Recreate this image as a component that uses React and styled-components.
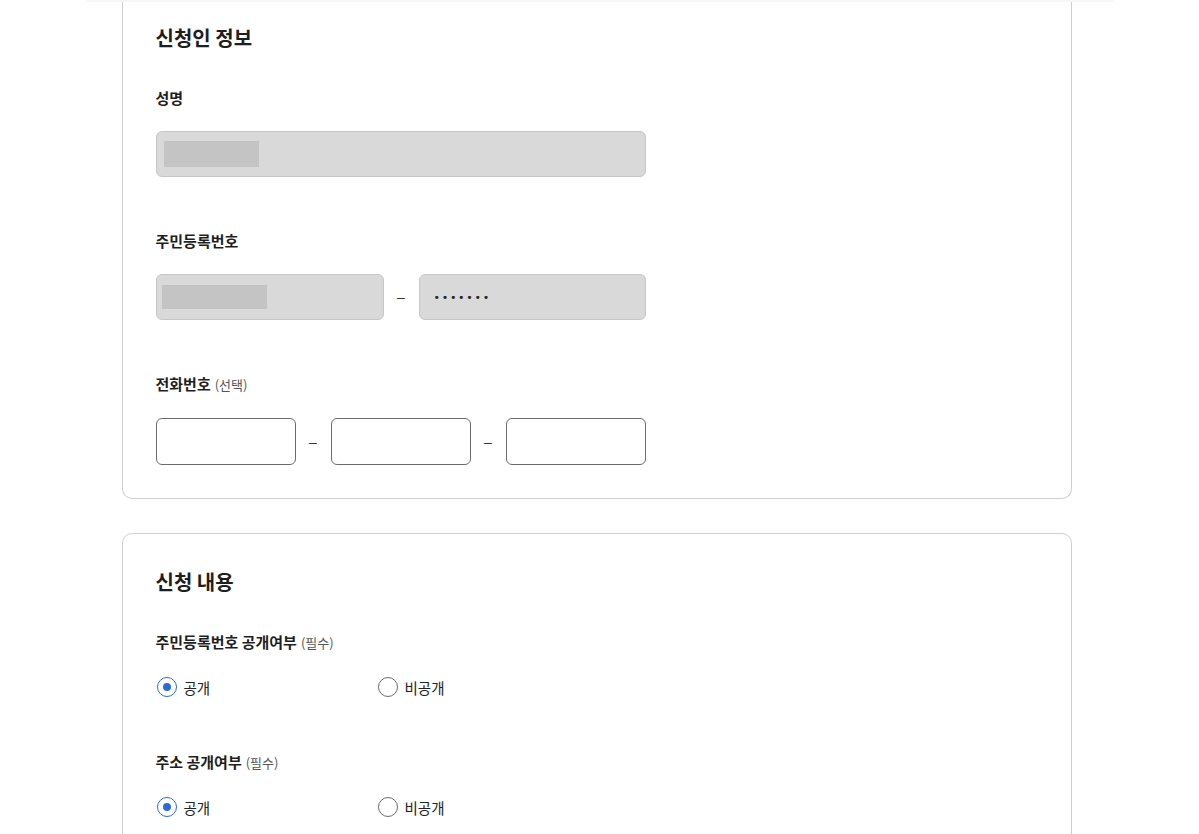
import React from "react";
import styled, { createGlobalStyle } from "styled-components";

const GlobalStyle = createGlobalStyle`
  html, body {
    margin: 0;
    padding: 0;
    background: #fff;
  }
  body {
    font-family: "Noto Sans CJK KR", "Noto Sans", sans-serif;
    color: #1e1e1e;
  }
`;

// the header above is scrolled away, only its soft edge is left
const HeaderEdge = styled.div`
  width: 1028px;
  height: 2px;
  margin: 0 auto;
  background: #f6f6f6;
`;

const Page = styled.div`
  width: 1028px;
  margin: 0 auto;
  padding-bottom: 40px;
`;

const Card = styled.section`
  width: 950px;
  box-sizing: border-box;
  margin-left: 36px;
  margin-top: ${props => (props.$clipped ? "0" : "34px")};
  padding: ${props => (props.$clipped ? "22px" : "34px")} 33px 33px;
  border: 1px solid #cfcfcf;
  border-top: ${props => (props.$clipped ? "none" : "1px solid #cfcfcf")};
  border-radius: ${props => (props.$clipped ? "0 0 10px 10px" : "10px")};
`;

const Title = styled.h2`
  margin: 0 0 35px;
  font-size: 20px;
  line-height: 28px;
  font-weight: 700;
  color: #1e1e1e;
`;

const Field = styled.div`
  & + & {
    margin-top: ${props => props.$gap || 54}px;
  }
`;

const Label = styled.div`
  font-size: 15px;
  line-height: 22px;
  font-weight: 700;
  color: #1e1e1e;
  margin-bottom: 22px;
`;

const Hint = styled.span`
  font-size: 13px;
  font-weight: 400;
  color: #555;
  margin-left: 4px;
`;

const Row = styled.div`
  display: flex;
  align-items: center;
  width: 490px;
`;

const Dash = styled.span`
  flex: none;
  width: ${props => props.$w || 35}px;
  text-align: center;
  font-family: "Liberation Sans", sans-serif;
  font-size: 14px;
  color: #333;
`;

const LockedBox = styled.div`
  box-sizing: border-box;
  width: ${props => props.$w}px;
  height: 46px;
  display: flex;
  align-items: center;
  padding: 0 ${props => props.$pad || 7}px;
  background: #d9d9d9;
  border: 1px solid #c6c6c6;
  border-radius: 6px;
`;

const Mask = styled.div`
  width: ${props => props.$w}px;
  height: ${props => props.$h}px;
  background: #c4c4c4;
`;

const Dots = styled.span`
  font-family: "DejaVu Sans", sans-serif;
  font-size: 11px;
  letter-spacing: 1.7px;
  color: #222;
`;

const TextInput = styled.input`
  box-sizing: border-box;
  width: 140px;
  height: 47px;
  padding: 0 12px;
  border: 1px solid #6b6b6b;
  border-radius: 6px;
  background: #fff;
  font-family: inherit;
  font-size: 15px;
  outline: none;
`;

const RadioRow = styled.div`
  display: grid;
  grid-template-columns: 221px 200px;
  height: 22px;
  align-items: center;
`;

const RadioLabel = styled.label`
  display: flex;
  align-items: center;
  gap: 7px;
  font-size: 14.5px;
  color: #222;
  cursor: pointer;
`;

const Circle = styled.span`
  box-sizing: border-box;
  width: 20px;
  height: 20px;
  margin-left: 1px;
  border-radius: 50%;
  border: 1px solid ${props => (props.$on ? "#2c6bd6" : "#6b6b6b")};
  display: flex;
  align-items: center;
  justify-content: center;
  &::after {
    content: "";
    width: 8px;
    height: 8px;
    border-radius: 50%;
    background: #2c6bd6;
    display: ${props => (props.$on ? "block" : "none")};
  }
`;

function RadioPair() {
  return (
    <RadioRow>
      <RadioLabel>
        <Circle $on />
        공개
      </RadioLabel>
      <RadioLabel>
        <Circle />
        비공개
      </RadioLabel>
    </RadioRow>
  );
}

export default function App() {
  return (
    <>
      <GlobalStyle />
      <HeaderEdge />
      <Page>
        <Card $clipped>
          <Title>신청인 정보</Title>
          <Field>
            <Label>성명</Label>
            <LockedBox $w={490}>
              <Mask $w={95} $h={26} />
            </LockedBox>
          </Field>
          <Field>
            <Label>주민등록번호</Label>
            <Row>
              <LockedBox $w={228} $pad={5}>
                <Mask $w={105} $h={24} />
              </LockedBox>
              <Dash>–</Dash>
              <LockedBox $w={227} $pad={14}>
                <Dots>•••••••</Dots>
              </LockedBox>
            </Row>
          </Field>
          <Field $gap={53}>
            <Label>
              전화번호<Hint>(선택)</Hint>
            </Label>
            <Row>
              <TextInput />
              <Dash>–</Dash>
              <TextInput />
              <Dash>–</Dash>
              <TextInput />
            </Row>
          </Field>
        </Card>

        <Card>
          <Title>신청 내용</Title>
          <Field>
            <Label>
              주민등록번호 공개여부<Hint>(필수)</Hint>
            </Label>
            <RadioPair />
          </Field>
          <Field>
            <Label>
              주소 공개여부<Hint>(필수)</Hint>
            </Label>
            <RadioPair />
          </Field>
        </Card>
      </Page>
    </>
  );
}
